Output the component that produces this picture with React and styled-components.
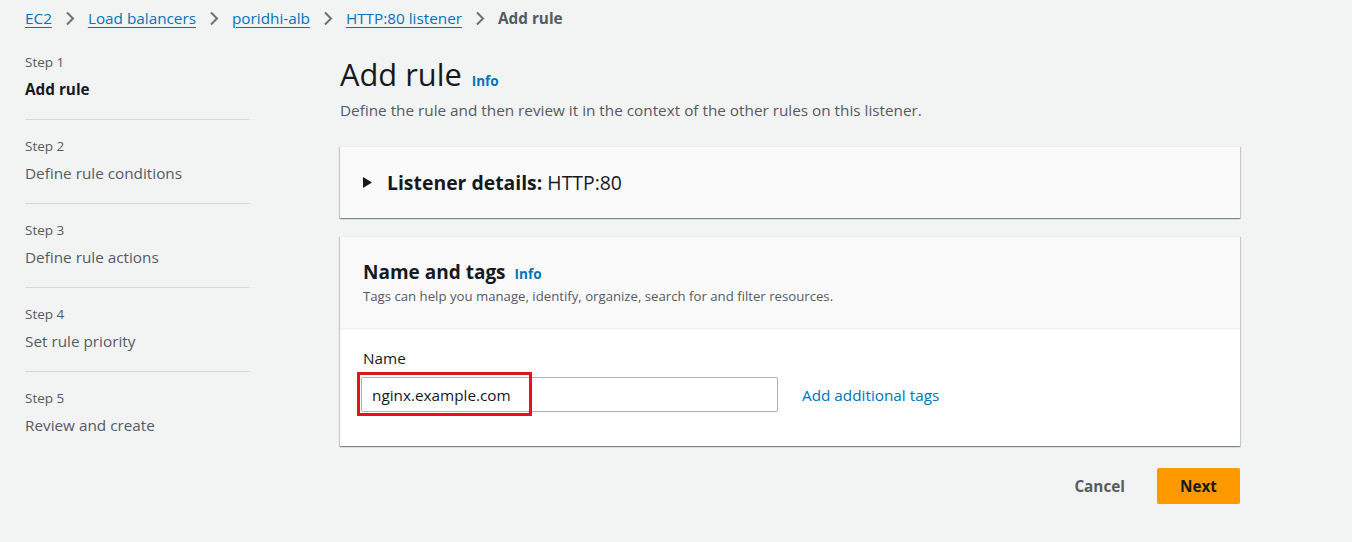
import React from 'react';
import styled, { createGlobalStyle } from 'styled-components';

const GlobalStyle = createGlobalStyle`
  html, body {
    margin: 0;
    padding: 0;
    background: #f2f3f3;
    font-family: "Open Sans", "Noto Sans", sans-serif;
    color: #16191f;
  }
`;

const Page = styled.div`
  min-height: 542px;
  padding: 7px 0 0 25px;
  box-sizing: border-box;
`;

const Breadcrumbs = styled.nav`
  display: flex;
  align-items: center;
  gap: 13px;
  height: 22px;
  font-size: 15.3px;
`;

const Crumb = styled.a`
  color: #0073bb;
  text-decoration: underline;
  text-underline-offset: 3px;
  cursor: pointer;
`;

const Current = styled.span`
  color: #545b64;
  font-weight: 700;
`;

const Chevron = () => (
  <svg width="10" height="15" viewBox="0 0 10 15" aria-hidden="true">
    <path d="M2 1.5l6 6-6 6" fill="none" stroke="#687078" strokeWidth="2" />
  </svg>
);

const Layout = styled.div`
  display: grid;
  grid-template-columns: 225px 900px;
  column-gap: 90px;
  margin-top: 23px;
`;

const SideNav = styled.ol`
  list-style: none;
  margin: 0;
  padding: 0;
`;

const StepItem = styled.li`
  padding: ${(p) => (p.$first ? '1px' : '17px')} 0 19px;
  border-bottom: ${(p) => (p.$last ? 'none' : '1px solid #d5dbdb')};
`;

const StepNo = styled.div`
  font-size: 13.5px;
  color: #545b64;
  line-height: 19px;
`;

const StepName = styled.div`
  font-size: 15.3px;
  line-height: 22px;
  margin-top: 6px;
  color: ${(p) => (p.$active ? '#16191f' : '#545b64')};
  font-weight: ${(p) => (p.$active ? 700 : 400)};
`;

const Main = styled.main`
  display: flex;
  flex-direction: column;
`;

const TitleRow = styled.div`
  display: flex;
  align-items: baseline;
  gap: 10px;
  margin-top: 3px;
`;

const Title = styled.h1`
  margin: 0;
  font-size: 30.8px;
  font-weight: 400;
  line-height: 38px;
  color: #16191f;
`;

const Info = styled.a`
  color: #0073bb;
  font-size: 13.5px;
  font-weight: 700;
  cursor: pointer;
`;

const Description = styled.p`
  margin: 6px 0 0;
  font-size: 15.3px;
  color: #545b64;
  line-height: 22px;
`;

const Card = styled.section`
  background: ${(p) => (p.$muted ? '#fafafa' : '#ffffff')};
  border-top: 1px solid #eaeded;
  box-shadow: 0 1px 1px 0 rgba(0, 28, 36, 0.3), 1px 1px 1px 0 rgba(0, 28, 36, 0.15),
    -1px 1px 1px 0 rgba(0, 28, 36, 0.15);
  margin-top: ${(p) => p.$gap}px;
`;

const Expander = styled.div`
  display: flex;
  align-items: center;
  gap: 15px;
  height: 71px;
  padding-left: 23px;
  font-size: 19.4px;
`;

const Caret = () => (
  <svg width="9" height="11" viewBox="0 0 9 11" aria-hidden="true">
    <path d="M0 0L9 5.5L0 11Z" fill="#16191f" />
  </svg>
);

const Strong = styled.b`
  font-weight: 700;
`;

const CardHeader = styled.header`
  background: #fafafa;
  border-bottom: 1px solid #eaeded;
  padding: 21px 23px 22px;
`;

const HeaderTitle = styled.div`
  display: flex;
  align-items: baseline;
  gap: 9px;
`;

const H2 = styled.h2`
  margin: 0;
  font-size: 19px;
  font-weight: 700;
  line-height: 28px;
`;

const HeaderSub = styled.div`
  font-size: 13.2px;
  color: #545b64;
  line-height: 20px;
`;

const CardBody = styled.div`
  padding: 18px 21px 34px;
`;

const Label = styled.label`
  display: block;
  font-size: 15.3px;
  line-height: 22px;
  color: #16191f;
  padding-left: 2px;
`;

const FieldRow = styled.div`
  display: flex;
  align-items: center;
  gap: 24px;
  margin-top: 8px;
`;

const InputWrap = styled.div`
  position: relative;
`;

const Input = styled.input`
  width: 417px;
  height: 35px;
  box-sizing: border-box;
  border: 1px solid #aab7b8;
  border-radius: 2px;
  padding: 0 10px;
  font-family: inherit;
  font-size: 15.3px;
  color: #16191f;
  background: #fff;
  outline: none;
`;

const Highlight = styled.div`
  position: absolute;
  left: -4px;
  top: -5px;
  width: 175px;
  height: 44px;
  box-sizing: border-box;
  border: 3px solid #e0141e;
  pointer-events: none;
`;

const LinkText = styled.a`
  color: #0073bb;
  font-size: 15.3px;
  cursor: pointer;
`;

const Actions = styled.div`
  display: flex;
  justify-content: flex-end;
  align-items: center;
  gap: 32px;
  margin-top: 22px;
`;

const Button = styled.button`
  font-family: inherit;
  font-size: 15.3px;
  font-weight: 700;
  border-radius: 2px;
  height: 36px;
  cursor: pointer;
  border: none;
  background: ${(p) => (p.$primary ? '#ff9900' : 'transparent')};
  color: ${(p) => (p.$primary ? '#16191f' : '#545b64')};
  width: ${(p) => (p.$primary ? '83px' : 'auto')};
  padding: 0;
`;

const steps = [
  'Add rule',
  'Define rule conditions',
  'Define rule actions',
  'Set rule priority',
  'Review and create',
];

export default function App() {
  return (
    <>
      <GlobalStyle />
      <Page>
        <Breadcrumbs>
          <Crumb>EC2</Crumb>
          <Chevron />
          <Crumb>Load balancers</Crumb>
          <Chevron />
          <Crumb>poridhi-alb</Crumb>
          <Chevron />
          <Crumb>HTTP:80 listener</Crumb>
          <Chevron />
          <Current>Add rule</Current>
        </Breadcrumbs>
        <Layout>
          <SideNav>
            {steps.map((s, i) => (
              <StepItem key={s} $first={i === 0} $last={i === steps.length - 1}>
                <StepNo>Step {i + 1}</StepNo>
                <StepName $active={i === 0}>{s}</StepName>
              </StepItem>
            ))}
          </SideNav>
          <Main>
            <TitleRow>
              <Title>Add rule</Title>
              <Info>Info</Info>
            </TitleRow>
            <Description>
              Define the rule and then review it in the context of the other rules on this listener.
            </Description>
            <Card $muted $gap={25}>
              <Expander>
                <Caret />
                <span>
                  <Strong>Listener details:</Strong> HTTP:80
                </span>
              </Expander>
            </Card>
            <Card $gap={18}>
              <CardHeader>
                <HeaderTitle>
                  <H2>Name and tags</H2>
                  <Info>Info</Info>
                </HeaderTitle>
                <HeaderSub>
                  Tags can help you manage, identify, organize, search for and filter resources.
                </HeaderSub>
              </CardHeader>
              <CardBody>
                <Label htmlFor="name">Name</Label>
                <FieldRow>
                  <InputWrap>
                    <Input id="name" defaultValue="nginx.example.com" />
                    <Highlight />
                  </InputWrap>
                  <LinkText>Add additional tags</LinkText>
                </FieldRow>
              </CardBody>
            </Card>
            <Actions>
              <Button>Cancel</Button>
              <Button $primary>Next</Button>
            </Actions>
          </Main>
        </Layout>
      </Page>
    </>
  );
}
